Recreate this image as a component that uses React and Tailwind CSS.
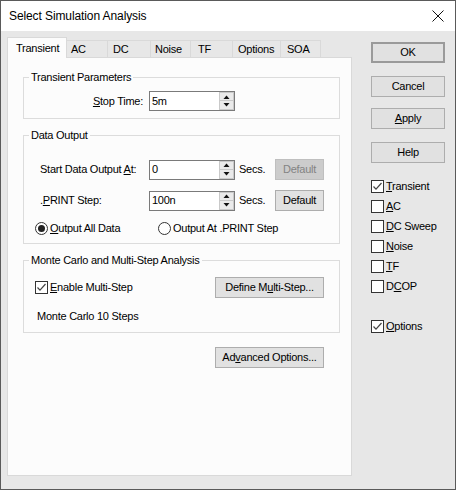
import React from 'react'

const tabs = [
  { label: 'AC', w: 'w-[41px]', pl: 'pl-[4px]' },
  { label: 'DC', w: 'w-[43px]', pl: 'pl-[5px]' },
  { label: 'Noise', w: 'w-[40px]', pl: 'pl-[4px]' },
  { label: 'TF', w: 'w-[42px]', pl: 'pl-[7px]' },
  { label: 'Options', w: 'w-[48px]', pl: 'pl-[5px]' },
  { label: 'SOA', w: 'w-[40px]', pl: 'pl-[6px]' },
]

function Key({ children }) {
  return <u className="underline underline-offset-[1px]">{children}</u>
}

function Button({ children, className = '', disabled = false }) {
  return (
    <div
      className={[
        'h-[21px] flex items-center justify-center border',
        disabled
          ? 'bg-[#cccccc] border-[#bfbfbf] text-[#838383]'
          : 'bg-[#e1e1e1] border-[#adadad] text-black',
        className,
      ].join(' ')}
    >
      <span>{children}</span>
    </div>
  )
}

function Spin({ value }) {
  return (
    <div className="w-[86px] h-[20px] border border-[#7a7a7a] bg-white flex">
      <div className="flex-1 pl-[2px] flex items-center text-black">{value}</div>
      <div className="w-[15px] flex flex-col">
        <div className="h-[9px] bg-[#eaeaea] border border-[#c9c9c9] flex items-center justify-center">
          <svg width="7" height="4" viewBox="0 0 7 4">
            <path d="M0.5 4 L3.5 0.5 L6.5 4 Z" fill="#111" />
          </svg>
        </div>
        <div className="h-[9px] bg-[#eaeaea] border border-[#c9c9c9] border-t-0 flex items-center justify-center">
          <svg width="7" height="4" viewBox="0 0 7 4">
            <path d="M0.5 0 L3.5 3.5 L6.5 0 Z" fill="#111" />
          </svg>
        </div>
      </div>
    </div>
  )
}

function Check({ checked }) {
  return (
    <div className="w-[13px] h-[13px] border border-[#333333] bg-white flex items-center justify-center shrink-0">
      {checked && (
        <svg width="11" height="11" viewBox="0 0 11 11">
          <path d="M1.5 5.5 L4 8.2 L9.5 2" fill="none" stroke="#444" strokeWidth="1.2" />
        </svg>
      )}
    </div>
  )
}

function Radio({ checked }) {
  return (
    <div className="w-[13px] h-[13px] rounded-full border border-[#333333] bg-white flex items-center justify-center shrink-0">
      {checked && <div className="w-[7px] h-[7px] rounded-full bg-[#222]" />}
    </div>
  )
}

function Group({ title, className = '', children }) {
  return (
    <fieldset className={['border border-[#dcdcdc]', className].join(' ')}>
      <legend className="ml-[5px] px-[2px] leading-[13px]">{title}</legend>
      {children}
    </fieldset>
  )
}

const sideChecks = [
  { label: <><Key>T</Key>ransient</>, checked: true },
  { label: <><Key>A</Key>C</>, checked: false },
  { label: <><Key>D</Key>C Sweep</>, checked: false },
  { label: <><Key>N</Key>oise</>, checked: false },
  { label: <><Key>T</Key>F</>, checked: false },
  { label: <>D<Key>C</Key>OP</>, checked: false },
]

export default function App() {
  return (
    <div className="w-[456px] h-[490px] border border-[#5a5a5a] flex flex-col font-['Liberation_Sans',Arial,sans-serif] text-[11px] tracking-[-0.25px] text-black leading-[13px]">
      {/* Title bar */}
      <div className="h-[30px] bg-white flex items-center justify-between pl-[8px] pr-[11px]">
        <span className="text-[12px] tracking-[-0.1px]">Select Simulation Analysis</span>
        <svg width="12" height="12" viewBox="0 0 12 12">
          <path d="M0.5 0.5 L11.5 11.5 M11.5 0.5 L0.5 11.5" stroke="#111" strokeWidth="1" />
        </svg>
      </div>

      <div className="flex-1 flex bg-[#e7e7e7]">
        {/* Tabs + page */}
        <div className="pl-[6px] pt-[6px]">
          <div className="h-[20px] flex items-end">
            <div className="relative z-10 w-[60px] h-[21px] mb-[-1px] bg-[#fcfcfc] border-l border-t border-r border-[#d9d9d9] pl-[8px] pt-[4px]">
              Transient
            </div>
            {tabs.map((t) => (
              <div
                key={t.label}
                className={['h-[17px] border-t border-r border-[#d9d9d9] pt-[2px] leading-[12px]', t.w, t.pl].join(' ')}
              >
                {t.label}
              </div>
            ))}
          </div>

          <div className="w-[345px] h-[419px] border border-[#d9d9d9] bg-[#fcfcfc] pl-[15px] pr-[11px]">
            <Group title="Transient Parameters" className="mt-[13px] pt-[7px] pb-[7px]">
              <div className="h-[20px] flex items-center">
                <span className="w-[125px] text-right pr-[6px]">
                  <Key>S</Key>top Time:
                </span>
                <Spin value="5m" />
              </div>
            </Group>

            <Group title="Data Output" className="mt-[10px] pt-[17px] pb-[8px]">
              <div className="h-[21px] flex items-center">
                <span className="w-[125px] pl-[16px]">
                  Start Data Output <Key>A</Key>t:
                </span>
                <Spin value="0" />
                <span className="ml-[4px] w-[36px]">Secs.</span>
                <Button disabled className="w-[49px]">Default</Button>
              </div>
              <div className="h-[21px] mt-[10px] flex items-center">
                <span className="w-[125px] pl-[16px]">
                  .<Key>P</Key>RINT Step:
                </span>
                <Spin value="100n" />
                <span className="ml-[4px] w-[36px]">Secs.</span>
                <Button className="w-[49px]">Default</Button>
              </div>
              <div className="h-[13px] mt-[11px] flex items-center pl-[11px]">
                <div className="w-[123px] flex items-center">
                  <Radio checked />
                  <span className="ml-[2px]">
                    <Key>O</Key>utput All Data
                  </span>
                </div>
                <div className="flex items-center">
                  <Radio />
                  <span className="ml-[2px]">Output At .PRINT Step</span>
                </div>
              </div>
            </Group>

            <Group title="Monte Carlo and Multi-Step Analysis" className="mt-[10px] pt-[10px] pb-[9px]">
              <div className="h-[21px] flex items-center pl-[11px] pr-[15px]">
                <Check checked />
                <span className="ml-[2px]">
                  <Key>E</Key>nable Multi-Step
                </span>
                <Button className="ml-auto w-[109px]">
                  Define M<Key>u</Key>lti-Step...
                </Button>
              </div>
              <div className="mt-[12px] pl-[13px]">Monte Carlo 10 Steps</div>
            </Group>

            <div className="mt-[14px] flex justify-end pr-[16px]">
              <Button className="w-[109px]">
                Ad<Key>v</Key>anced Options...
              </Button>
            </div>
          </div>
        </div>

        {/* Right column */}
        <div className="ml-[19px] pt-[11px] w-[74px] flex flex-col">
          <div className="h-[21px] flex items-center justify-center border-2 border-[#9a9a9a] bg-[#e1e1e1]">
            OK
          </div>
          <Button className="mt-[13px]">Cancel</Button>
          <Button className="mt-[11px]">
            <Key>A</Key>pply
          </Button>
          <Button className="mt-[13px]">Help</Button>

          <div className="mt-[13px] flex flex-col">
            {sideChecks.map((c, i) => (
              <div key={i} className="h-[20px] flex items-center">
                <Check checked={c.checked} />
                <span className="ml-[2px]">{c.label}</span>
              </div>
            ))}
            <div className="h-[20px]" />
            <div className="h-[20px] flex items-center">
              <Check checked />
              <span className="ml-[2px]">
                <Key>O</Key>ptions
              </span>
            </div>
          </div>
        </div>
      </div>
    </div>
  )
}
